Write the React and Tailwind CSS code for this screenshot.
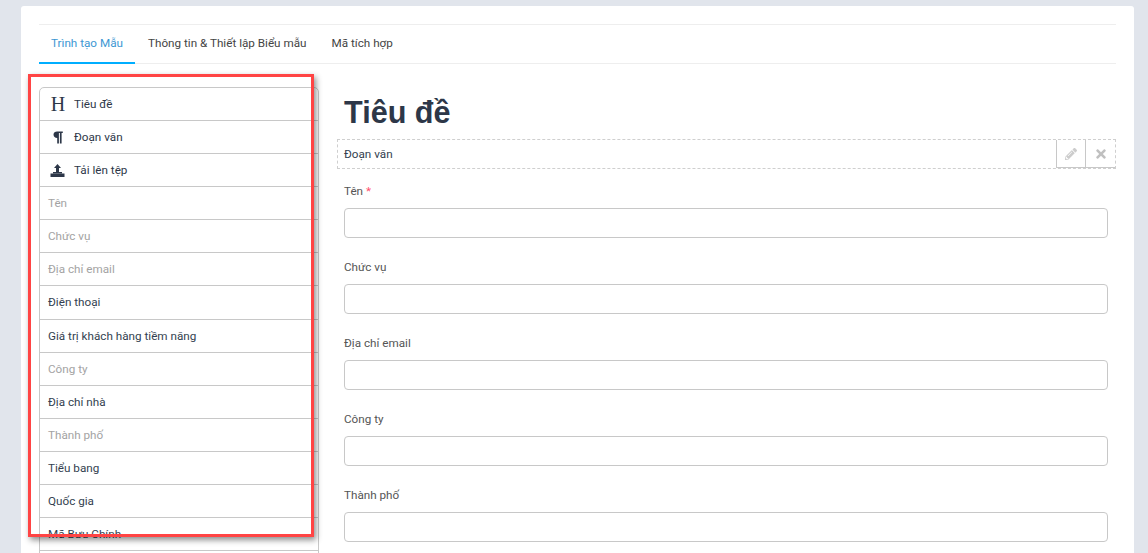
import React from "react";
import { FaPencilAlt, FaTimes } from "react-icons/fa";

const rows = [
  ["Tên", true], ["Chức vụ", true], ["Địa chỉ email", true], ["Điện thoại", false],
  ["Giá trị khách hàng tiềm năng", false], ["Công ty", true], ["Địa chỉ nhà", false],
  ["Thành phố", true], ["Tiểu bang", false], ["Quốc gia", false], ["Mã Bưu Chính", false],
];
const fields = ["Tên", "Chức vụ", "Địa chỉ email", "Công ty", "Thành phố"];

function Upload() {
  return (
    <svg width="15" height="13" viewBox="0 0 15 13" fill="#2d3748">
      <path d="M7.5 0 L11 4 H9 V8 H6 V4 H4 Z" />
      <rect x="3" y="8" width="9" height="1.5" />
      <rect x="0.5" y="9.5" width="14" height="3.5" />
    </svg>
  );
}

function Pilcrow() {
  return (
    <svg width="10" height="13" viewBox="0 0 10 13" fill="#2d3748">
      <path d="M0.5 3.6 C0.5 1.4 2.2 0.5 4 0.5 H9.8 V2 H8.6 V12.5 H6.9 V2 H5.9 V12.5 H4.2 V7 C2 7 0.5 5.8 0.5 3.6 Z" />
    </svg>
  );
}

function IconRow({ icon, label }) {
  return (
    <div className="h-[33px] flex items-center border-b border-[#c8c8c8] text-[#2d3748]">
      <div className="w-[34px] flex justify-center items-center">{icon}</div>
      <span className="pt-[1px]">{label}</span>
    </div>
  );
}

export default function App() {
  return (
    <div className="h-[553px] overflow-hidden bg-[#e1e5ec] px-[21px] pr-[14px] pt-[6px] relative font-['Roboto',sans-serif]">
      <div className="bg-white rounded-t-[3px] h-[600px] px-[18px] pt-[18px]">
        <div className="border-t border-[#eeeeee] border-b h-[40px] flex text-[11.7px] leading-[36px] whitespace-nowrap">
          <div className="px-3 text-[#3d97d3] border-b-[2px] border-[#00aeff] h-[39px] w-[96px]">Trình tạo Mẫu</div>
          <div className="pl-[13px] pr-3 text-[#444444]">Thông tin &amp; Thiết lập Biểu mẫu</div>
          <div className="pl-[13px] text-[#444444]">Mã tích hợp</div>
        </div>
        <div className="flex mt-[23px]">
          <div className="w-[280px] shrink-0 border border-[#c8c8c8] rounded-t-[5px] text-[11.7px] h-[480px]">
            <IconRow icon={<span className="font-['Liberation_Serif',serif] text-[20px] leading-none ml-[2px]">H</span>} label="Tiêu đề" />
            <IconRow icon={<span className="flex ml-[2px]"><Pilcrow /></span>} label="Đoạn văn" />
            <IconRow icon={<span className="flex ml-[1px]"><Upload /></span>} label="Tải lên tệp" />
            {rows.map(([t, muted]) => (
              <div key={t} className={`${t === "Điện thoại" ? "h-[34px]" : "h-[33px]"} flex items-center pl-[8px] pt-[1px] border-b border-[#c8c8c8] ${muted ? "text-[#a3a3a3]" : "text-[#333f50]"}`}>{t}</div>
            ))}
          </div>
          <div className="w-[779px] ml-[18px]">
            <h1 className="pl-[7px] h-[52px] text-[30.6px] leading-[50px] font-bold text-[#2d3748] font-['Liberation_Sans',sans-serif]">Tiêu đề</h1>
            <div className="h-[30px] border border-dashed border-[#cfcfcf] flex items-center pl-[6px] text-[11.7px] text-[#333f50]">
              <span className="flex-1 pt-[1px]">Đoạn văn</span>
              <div className="w-[29px] h-full flex items-center justify-center border-l border-b border-[#c8c8c8] text-[#cccccc]"><FaPencilAlt size={12} /></div>
              <div className="w-[30px] h-full flex items-center justify-center border-l border-b border-[#c8c8c8] text-[#c0c0c0]"><FaTimes size={14} /></div>
            </div>
            <div className="pl-[7px] pr-[8px] pt-[14px] flex flex-col gap-[16px]">
              {fields.map((f, i) => (
                <div key={f} className="h-[60px]">
                  <div className="h-[18px] text-[11.7px] leading-[16px] text-[#555555]">
                    {f}{i === 0 && <span className="text-[#ff4d6d]"> *</span>}
                  </div>
                  <div className="h-[30px] mt-[7px] border border-[#c8c8c8] rounded-[4px] bg-white" />
                </div>
              ))}
            </div>
          </div>
        </div>
      </div>
      <div className="absolute left-[28px] top-[74px] w-[286px] h-[463px] border-[3px] border-[#ff4444] shadow-[2px_3px_6px_rgba(0,0,0,0.45)]" />
    </div>
  );
}
